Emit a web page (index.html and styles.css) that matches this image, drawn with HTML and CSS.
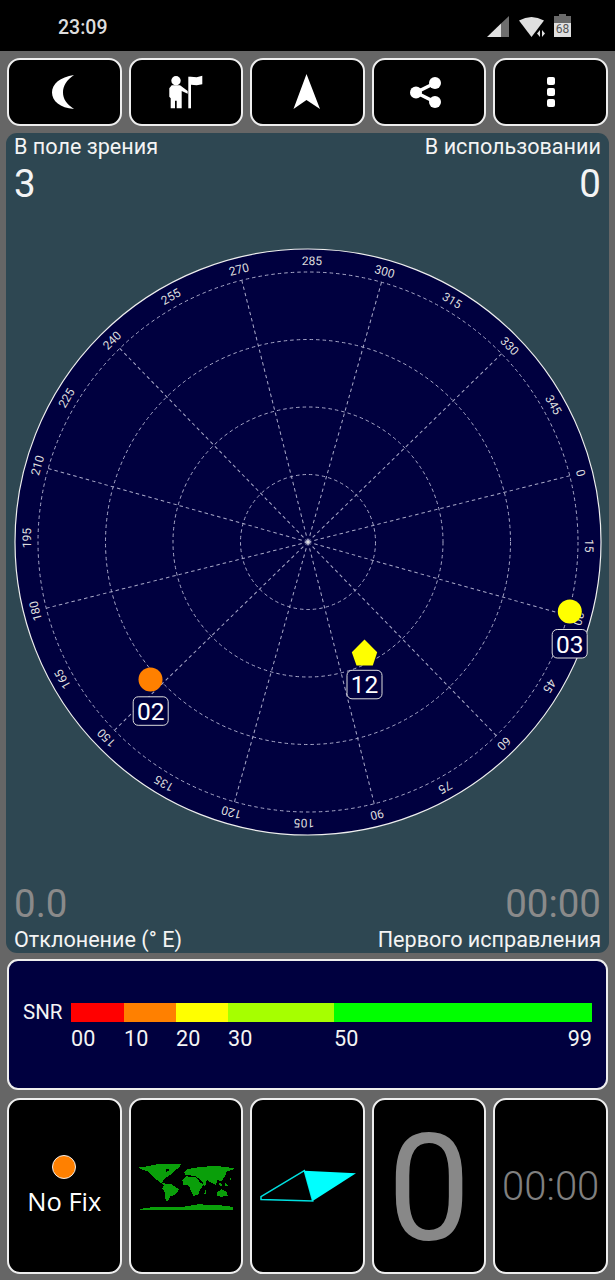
FILE: index.html
```html
<!DOCTYPE html>
<html lang="ru">
<head>
  <meta charset="UTF-8">
  <meta name="viewport" content="width=device-width, initial-scale=1.0">
  <title>GPS</title>
  <link rel="stylesheet" href="styles.css">
</head>
<body>
  <div class="statusbar">
    <span class="clock">23:09</span>
    <div class="status-icons">
      <svg class="signal" width="22" height="22" viewBox="0 0 22 22">
        <path class="light" d="M0 21 14 7.400V21Z"/>
        <path class="mid" d="M14 7.400 22 0V21H14Z"/>
      </svg>
      <svg class="wifi" width="28" height="22" viewBox="0 0 28 22">
        <path class="light" d="M0 4.500Q12.500-2.500 25 4.500L12.500 21Z"/>
        <path class="light" d="M21 14V21L18 17.500ZM23 14V21L26 17.500Z"/>
      </svg>
      <div class="battery"><span>68</span></div>
    </div>
  </div>

  <div class="toolbar">
    <button class="tile">
      <svg width="40" height="40" viewBox="0 0 40 40"><path d="M30 3C16 5 8 12 8 20.500 8 29 16 36 30 37 22.500 32 19 27 19 20.500 19 14 22.500 8 30 3Z"/></svg>
    </button>
    <button class="tile">
      <svg width="40" height="40" viewBox="0 0 40 40">
        <circle cx="10" cy="8.700" r="4.700"/>
        <path d="M5.700 13.300H14L21.700 19V21.700L15.700 19V36.300H10.700V28.700H9V36.300H4.700V26.300L3.300 24.700V16.300Z"/>
        <path d="M22.300 4.700H25V36.300H22.300Z"/>
        <path d="M25 4.700 30.700 5.300 36.300 3.700V12.300L30.700 13.300 25 12.700Z"/>
      </svg>
    </button>
    <button class="tile">
      <svg width="40" height="40" viewBox="0 0 40 40"><path d="M19.500 2 33 37 19.500 28 6.500 37Z"/></svg>
    </button>
    <button class="tile">
      <svg width="40" height="40" viewBox="0 0 40 40">
        <circle cx="26" cy="11" r="6"/>
        <circle cx="7" cy="20.500" r="6"/>
        <circle cx="26" cy="30" r="6"/>
        <path class="link" d="M26 11 7 20.500 26 30"/>
      </svg>
    </button>
    <button class="tile">
      <svg width="40" height="40" viewBox="0 0 40 40">
        <rect x="16" y="5" width="8" height="8" rx="2"/>
        <rect x="16" y="16" width="8" height="8" rx="2"/>
        <rect x="16" y="27" width="8" height="8" rx="2"/>
      </svg>
    </button>
  </div>

  <div class="sky-panel">
    <div class="corner-row">
      <div>
        <div class="caption">В поле зрения</div>
        <div class="value top">3</div>
      </div>
      <div class="right">
        <div class="caption">В использовании</div>
        <div class="value top">0</div>
      </div>
    </div>

    <svg class="sky" width="588" height="588" viewBox="-294 -294 588 588">
      <circle class="disc" r="293"/>
      <circle class="grid" r="67.500"/>
      <circle class="grid" r="135"/>
      <circle class="grid" r="202.500"/>
      <circle class="grid" r="270"/>

      <line class="grid" y2="-270" transform="rotate(75.800)"/>
      <line class="grid" y2="-270" transform="rotate(105.800)"/>
      <line class="grid" y2="-270" transform="rotate(135.800)"/>
      <line class="grid" y2="-270" transform="rotate(165.800)"/>
      <line class="grid" y2="-270" transform="rotate(195.800)"/>
      <line class="grid" y2="-270" transform="rotate(225.800)"/>
      <line class="grid" y2="-270" transform="rotate(255.800)"/>
      <line class="grid" y2="-270" transform="rotate(285.800)"/>
      <line class="grid" y2="-270" transform="rotate(315.800)"/>
      <line class="grid" y2="-270" transform="rotate(345.800)"/>
      <line class="grid" y2="-270" transform="rotate(15.800)"/>
      <line class="grid" y2="-270" transform="rotate(45.800)"/>
      <circle class="hub" r="1.500"/>

      <text class="deg" transform="rotate(75.800) translate(0 -277)">0</text>
      <text class="deg" transform="rotate(90.800) translate(0 -277)">15</text>
      <text class="deg" transform="rotate(105.800) translate(0 -277)">30</text>
      <text class="deg" transform="rotate(120.800) translate(0 -277)">45</text>
      <text class="deg" transform="rotate(135.800) translate(0 -277)">60</text>
      <text class="deg" transform="rotate(150.800) translate(0 -277)">75</text>
      <text class="deg" transform="rotate(165.800) translate(0 -277)">90</text>
      <text class="deg" transform="rotate(180.800) translate(0 -277)">105</text>
      <text class="deg" transform="rotate(195.800) translate(0 -277)">120</text>
      <text class="deg" transform="rotate(210.800) translate(0 -277)">135</text>
      <text class="deg" transform="rotate(225.800) translate(0 -277)">150</text>
      <text class="deg" transform="rotate(240.800) translate(0 -277)">165</text>
      <text class="deg" transform="rotate(255.800) translate(0 -277)">180</text>
      <text class="deg" transform="rotate(270.800) translate(0 -277)">195</text>
      <text class="deg" transform="rotate(285.800) translate(0 -277)">210</text>
      <text class="deg" transform="rotate(300.800) translate(0 -277)">225</text>
      <text class="deg" transform="rotate(315.800) translate(0 -277)">240</text>
      <text class="deg" transform="rotate(330.800) translate(0 -277)">255</text>
      <text class="deg" transform="rotate(345.800) translate(0 -277)">270</text>
      <text class="deg" transform="rotate(0.800) translate(0 -277)">285</text>
      <text class="deg" transform="rotate(15.800) translate(0 -277)">300</text>
      <text class="deg" transform="rotate(30.800) translate(0 -277)">315</text>
      <text class="deg" transform="rotate(45.800) translate(0 -277)">330</text>
      <text class="deg" transform="rotate(60.800) translate(0 -277)">345</text>

      <!-- спутники -->
      <circle class="sat-orange" cx="-157.500" cy="137.500" r="12"/>
      <rect class="sat-box" x="-174.800" y="154.800" width="35" height="28.500" rx="5"/>
      <text class="sat-id" x="-157.300" y="178">02</text>

      <circle class="sat-yellow" cx="261.800" cy="69.500" r="12"/>
      <rect class="sat-box" x="244.200" y="87.500" width="35" height="28.500" rx="5"/>
      <text class="sat-id" x="261.700" y="110.500">03</text>

      <polygon class="sat-yellow" points="56.500,97.500 69.200,110.200 64.800,123.500 48.500,123.500 43.800,110.200"/>
      <rect class="sat-box" x="39" y="128.300" width="35" height="28.500" rx="5"/>
      <text class="sat-id" x="56.500" y="151">12</text>
    </svg>

    <div class="corner-row">
      <div>
        <div class="value dim">0.0</div>
        <div class="caption bottom">Отклонение (° E)</div>
      </div>
      <div class="right">
        <div class="value dim">00:00</div>
        <div class="caption bottom">Первого исправления</div>
      </div>
    </div>
  </div>

  <div class="snr-panel">
    <div class="snr-row">
      <span class="snr-name">SNR</span>
      <div class="snr-scale">
        <div class="seg red"></div>
        <div class="seg orange"></div>
        <div class="seg yellow"></div>
        <div class="seg lime"></div>
        <div class="seg green"></div>
        <span class="num">00</span>
        <span class="num">10</span>
        <span class="num">20</span>
        <span class="num">30</span>
        <span class="num last"><span>50</span><span>99</span></span>
      </div>
    </div>
  </div>

  <div class="cards">
    <div class="tile card fix">
      <span class="fix-dot"></span>
      <span class="fix-text">No Fix</span>
    </div>
    <div class="tile card">
      <svg class="world" width="110" height="70" viewBox="18 0 330 210" shape-rendering="crispEdges">
        <path d="M37 50 60 47 85 42 110 38 168 40 162 50 150 58 138 70 126 78 116 86 112 95 125 100 117 102 106 95 92 84 80 72 66 60 50 55Z"/>
        <path d="M118 100 140 100 162 115 152 130 136 136 128 150 122 148 120 125 112 112Z"/>
        <path d="M178 65 185 55 210 50 240 47 270 44 300 48 328 52 320 58 306 60 300 75 288 92 278 86 272 102 258 94 245 87 240 108 232 92 225 85 215 78 195 73 180 72Z"/>
        <path d="M172 86 185 75 215 80 225 95 236 100 226 115 220 130 205 136 198 120 192 104 175 102Z"/>
        <path d="M275 125 290 115 305 122 308 135 290 137 275 135Z"/>
        <path d="M284 96 292 100 290 106 282 102ZM300 96 308 104 302 106ZM240 118 244 118 242 130 238 128ZM314 78 318 84 314 90Z"/>
        <path d="M37 178 60 170 120 168 170 168 220 160 280 162 325 168 325 178Z"/>
        <path class="hole" d="M122 54 130 52 132 60 124 62ZM190 74 212 74 212 77 190 77Z"/>
      </svg>
    </div>
    <div class="tile card">
      <svg width="110" height="50" viewBox="-2 0 110 50">
        <path class="needle-line" d="M7 35.700 50.300 9.700 58.700 40 7 38.500Z"/>
        <path class="needle" d="M50.300 9.700 102 12.300 58.700 40Z"/>
      </svg>
    </div>
    <div class="tile card"><span class="big-zero">0</span></div>
    <div class="tile card"><span class="small-time">00:00</span></div>
  </div>
</body>
</html>
```

FILE: styles.css
```css
* {
  box-sizing: border-box;
}

body {
  margin: 0;
  width: 615px;
  height: 1280px;
  overflow: hidden;
  background: #666;
  font-family: Roboto, "Liberation Sans", sans-serif;
  color: #f4f4f4;
}

/* ---- status bar ---- */

.statusbar {
  height: 51px;
  background: #000;
  display: flex;
  align-items: center;
  justify-content: space-between;
  padding: 5px 44px 3px 58px;
}

.clock {
  font-size: 19.500px;
  font-weight: 500;
  color: #ddd;
  margin-top: 2px;
}

.status-icons {
  display: flex;
  align-items: center;
  gap: 10px;
}

.status-icons .light {
  fill: #e0e0e0;
}

.status-icons .mid {
  fill: #6e6e6e;
}

.wifi {
  margin-right: -3px;
}

.battery {
  width: 17px;
  height: 21px;
  background: linear-gradient(#6a6a6a 7px, #e0e0e0 7px);
  display: flex;
  align-items: flex-end;
  justify-content: center;
  position: relative;
  font-size: 12px;
  line-height: 15px;
  color: #555;
}

.battery:before {
  content: " ";
  position: absolute;
  top: -2px;
  left: 5px;
  width: 7px;
  height: 2px;
  background: #6a6a6a;
}

/* ---- tiles ---- */

.tile {
  background: #000;
  border: 2px solid #eee;
  border-radius: 13px;
  padding: 0;
  display: flex;
  align-items: center;
  justify-content: center;
}

.tile svg {
  fill: #fff;
  display: block;
  flex: none;
}

.tile .link {
  fill: none;
  stroke: #fff;
  stroke-width: 3.500;
}

.toolbar,
.cards {
  display: grid;
  grid-template-columns: repeat(5, minmax(0, 1fr));
  gap: 7px;
  margin: 0 7px;
}

.toolbar {
  height: 68px;
  margin-top: 7px;
}

/* ---- sky panel ---- */

.sky-panel {
  height: 820px;
  margin: 7px 6px 0;
  padding: 0 8px;
  background: #2e4752;
  border-radius: 11px;
  display: flex;
  flex-direction: column;
  justify-content: space-between;
  align-items: stretch;
}

.corner-row {
  display: flex;
  justify-content: space-between;
}

.right {
  text-align: right;
}

.caption {
  font-size: 21.600px;
  line-height: 28px;
}

.caption.bottom {
  margin-bottom: -1px;
}

.value {
  font-size: 38.500px;
  line-height: 42px;
}

.value.top {
  margin-top: 2px;
}

.value.dim {
  color: #8a8a8a;
  margin-bottom: 1px;
}

.sky {
  display: block;
  align-self: center;
  flex: none;
  margin-top: -4px;
}

.disc {
  fill: #00003f;
  stroke: #eee;
  stroke-width: 1.200;
}

.grid {
  fill: none;
  stroke: #a8a8c8;
  stroke-width: 1;
  stroke-dasharray: 3.500 3;
}

.hub {
  fill: #ddd;
}

.deg {
  fill: #ddd;
  font-size: 12px;
  text-anchor: middle;
}

.sat-orange {
  fill: #ff8000;
}

.sat-yellow {
  fill: #ffff00;
}

.sat-box {
  fill: #00003f;
  stroke: #ddd;
  stroke-width: 1;
}

.sat-id {
  fill: #fff;
  font-size: 24.500px;
  text-anchor: middle;
}

/* ---- SNR ---- */

.snr-panel {
  height: 131px;
  margin: 6px 7px 0;
  background: #00003f;
  border: 2px solid #eee;
  border-radius: 11px;
  display: flex;
  align-items: flex-start;
  padding: 42px 0 0 14px;
}

.snr-row {
  display: flex;
  align-items: flex-start;
  gap: 8px;
}

.snr-name {
  font-size: 20.500px;
  line-height: 19px;
  width: 40px;
}

.snr-scale {
  width: 521px;
  display: grid;
  grid-template-columns: 53px 52px 52px 106px 1fr;
  grid-template-rows: 19px auto;
}

.seg.red { background: #ff0000; }
.seg.orange { background: #ff8000; }
.seg.yellow { background: #ffff00; }
.seg.lime { background: #a6ff00; }
.seg.green { background: #00ff00; }

.num {
  font-size: 21.600px;
  line-height: 24px;
  margin-top: 5px;
}

.num.last {
  display: flex;
  justify-content: space-between;
}

/* ---- bottom cards ---- */

.cards {
  height: 176px;
  margin-top: 8px;
}

.fix {
  flex-direction: column;
}

.fix-dot {
  width: 24px;
  height: 24px;
  border-radius: 50%;
  background: #ff8000;
  border: 1px solid #eee;
}

.fix-text {
  font-family: "Open Sans", sans-serif;
  font-size: 25.500px;
  line-height: 34px;
  margin-top: 5px;
  color: #fff;
}

.tile .world {
  fill: #0a9f0a;
}

.tile .world .hole {
  fill: #000;
}

.tile .needle {
  fill: #00ffff;
}

.tile .needle-line {
  fill: none;
  stroke: #00e0e0;
  stroke-width: 1.500;
}

.big-zero {
  font-size: 148px;
  line-height: 148px;
  margin-top: 8px;
  color: #888;
}

.small-time {
  font-size: 40px;
  font-weight: 300;
  color: #808080;
}
```
